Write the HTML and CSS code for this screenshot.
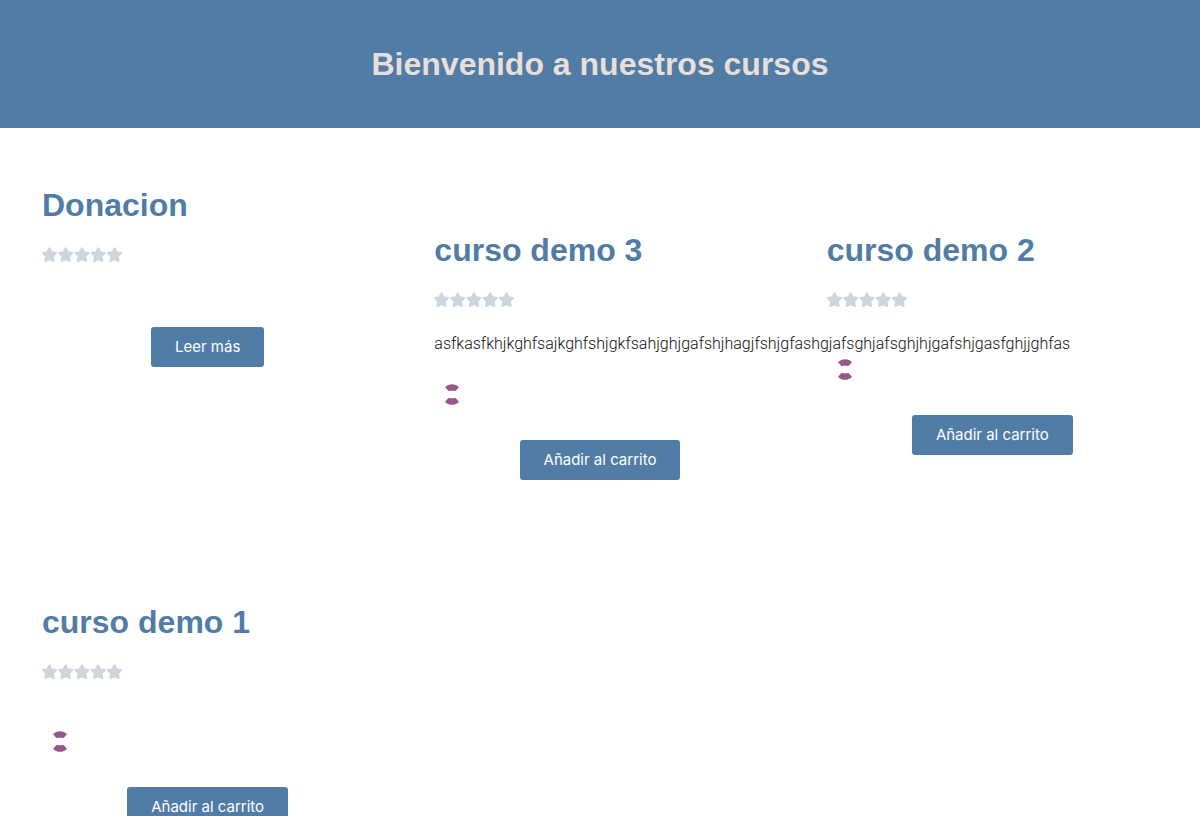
FILE: index.html
```html
<!DOCTYPE html>
<html lang="es">
<head>
<meta charset="utf-8">
<meta name="viewport" content="width=device-width, initial-scale=1">
<title>Cursos</title>
<link rel="stylesheet" href="styles.css">
</head>
<body>
<svg class="defs" aria-hidden="true">
  <symbol id="stars" viewBox="0 0 82 16">
    <path id="star" d="M8.500 1.300 10.500 5.200 15 6 11.800 9.200 12.600 14 8.500 12 4.400 14 5.200 9.200 2 6 6.500 5.200Z" fill="#ccd6df" stroke="#ccd6df" stroke-width="2" stroke-linejoin="round"/>
    <use href="#star" x="16.2"/><use href="#star" x="32.5"/><use href="#star" x="48.7"/><use href="#star" x="65"/>
  </symbol>
  <symbol id="mark" viewBox="0 0 14 21">
    <path id="cap" d="M0 3.300C3.500-.9 10.500-.9 14 3.300L11.500 6 10 7.200 9 6.800H5L4 7.200 2.500 6Z" fill="#96588a"/>
    <use href="#cap" transform="matrix(1 0 0 -1 0 21)"/>
  </symbol>
</svg>
<header class="banner"><h1 class="banner-title">Bienvenido a nuestros cursos</h1></header>
<main class="courses">
  <article class="card">
    <h2 class="title">Donacion</h2>
    <svg class="stars" role="img" aria-label="Sin valoraciones"><use href="#stars"/></svg>
    <div class="description"></div>
    <a class="button" href="#">Leer más</a>
  </article>
  <article class="card card-lowered">
    <h2 class="title">curso demo 3</h2>
    <svg class="stars" role="img" aria-label="Sin valoraciones"><use href="#stars"/></svg>
    <div class="description">asfkasfkhjkghfsajkghfshjgkfsahjghjgafshjhagjfshjgfashgjafsghjafsghjhjgafshjgasfghjjghfas</div>
    <svg class="mark" aria-hidden="true"><use href="#mark"/></svg>
    <button class="button" type="button">Añadir al carrito</button>
  </article>
  <article class="card card-lowered">
    <h2 class="title">curso demo 2</h2>
    <svg class="stars" role="img" aria-label="Sin valoraciones"><use href="#stars"/></svg>
    <div class="description"></div>
    <svg class="mark" aria-hidden="true"><use href="#mark"/></svg>
    <button class="button" type="button">Añadir al carrito</button>
  </article>
  <article class="card">
    <h2 class="title">curso demo 1</h2>
    <svg class="stars" role="img" aria-label="Sin valoraciones"><use href="#stars"/></svg>
    <div class="description"></div>
    <svg class="mark" aria-hidden="true"><use href="#mark"/></svg>
    <button class="button" type="button">Añadir al carrito</button>
  </article>
</main>
</body>
</html>
```
FILE: styles.css
```css
* { box-sizing: border-box; }
body { margin: 0; background: #fff; color: #111; font-family: "Liberation Sans", Arial, sans-serif; }
.defs { position: absolute; width: 0; height: 0; }
.banner { padding: 44px 24px; background: #517ca6; text-align: center; }
.banner-title, .title { margin: 0; font-size: 32px; line-height: 40px; font-weight: 700; }
.banner-title { color: #e7dfd8; }
.courses { display: grid; grid-template-columns: repeat(3, minmax(0, 1fr)); gap: 122px 61px; padding: 57px 42px; }
.card { display: flex; flex-direction: column; align-items: flex-start; }
.card-lowered { padding-top: 45px; }
.title { color: #517ca6; }
.stars { width: 82px; height: 16px; margin: 22px 0 23px -1px; }
.description { font-family: Roboto, sans-serif; font-weight: 300; font-size: 16px; line-height: 25px; }
.mark { width: 14px; height: 21px; margin: 28px 0 0 11px; }
.button {
  align-self: center; margin: 41px 0 0; padding: 8px 24px; border: 0; border-radius: 3px;
  background: #517ca6; color: #fff; font-family: Inter, sans-serif; font-size: 15px; line-height: 24px;
  text-decoration: none; cursor: pointer;
}
.mark + .button { margin-top: 35px; }
```
